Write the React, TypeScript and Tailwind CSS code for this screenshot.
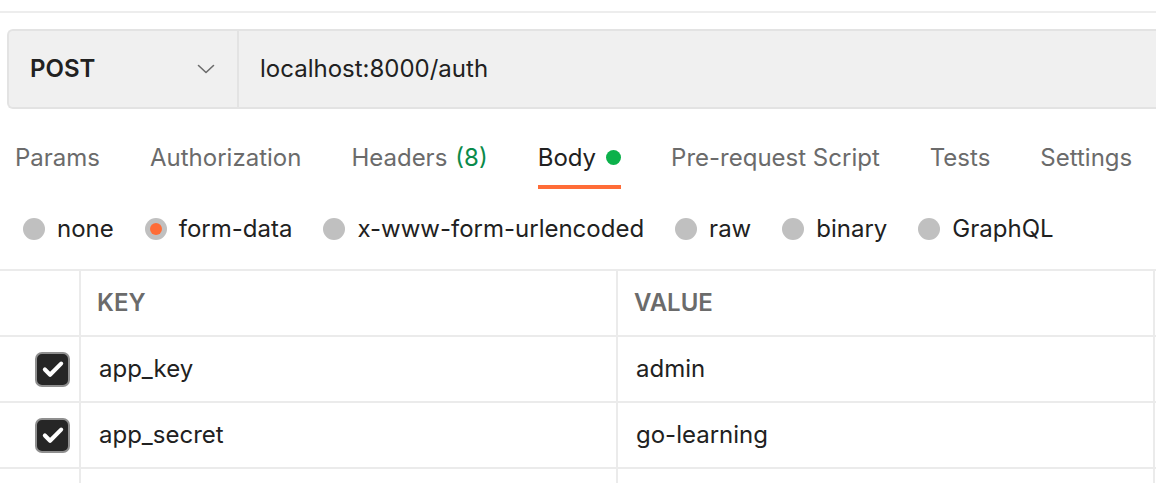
const TABS = [
  { label: "Params" },
  { label: "Authorization" },
  { label: "Headers", count: "(8)" },
  { label: "Body", active: true },
  { label: "Pre-request Script" },
  { label: "Tests" },
  { label: "Settings" },
];

const BODY_TYPES = ["none", "form-data", "x-www-form-urlencoded", "raw", "binary", "GraphQL"];

const ROWS = [
  { key: "app_key", value: "admin" },
  { key: "app_secret", value: "go-learning" },
];

function Check() {
  return (
    <span className="grid h-[35px] w-[35px] place-items-center rounded-[7px] border-2 border-[#8f8f8f] bg-[#262626]">
      <svg width="26" height="26" viewBox="0 0 24 24" fill="none" stroke="white" strokeWidth="3.8" strokeLinecap="round" strokeLinejoin="round">
        <path d="M4.5 12.5l4.8 4.8L19.5 7" />
      </svg>
    </span>
  );
}

export default function App() {
  return (
    <div className="h-[483px] w-[1156px] overflow-hidden bg-white font-['Inter',sans-serif] text-[24px] text-[#212121]">
      <div className="pt-[11px]">
        <div className="h-[2px] bg-[#ededed]" />
      </div>

      {/* request bar */}
      <div className="ml-[7px] mt-[16px] flex h-[80px] rounded-l-[6px] border-2 border-r-0 border-[#e3e3e3] bg-[#f0f0f0]">
        <div className="flex w-[230px] items-center justify-between border-r-2 border-[#e3e3e3] pl-[21px] pr-[22px]">
          <span className="font-semibold text-[#212121]">POST</span>
          <svg width="18" height="10" viewBox="0 0 18 10" fill="none" stroke="#6b6b6b" strokeWidth="1.6" strokeLinecap="round" strokeLinejoin="round">
            <path d="M1.5 1.5L9 8.5L16.5 1.5" />
          </svg>
        </div>
        <div className="flex items-center pl-[21px] text-[#212121]">localhost:8000/auth</div>
      </div>

      {/* tabs */}
      <div className="mt-[30px] flex gap-[50px] pl-[15px]">
        {TABS.map((t) => (
          <div key={t.label} className="flex flex-col">
            <div className={`flex h-[37px] items-center gap-[10px] ${t.active ? "text-[#212121]" : "text-[#6b6b6b]"}`}>
              <span>
                {t.label}
                {t.count && <span className="ml-[8px] text-[#0a8a4a]">{t.count}</span>}
              </span>
              {t.active && <span className="h-[15px] w-[15px] rounded-full bg-[#0cb14b]" />}
            </div>
            <div className={`mt-[9px] h-[4px] ${t.active ? "bg-[#ff6c37]" : ""}`} />
          </div>
        ))}
      </div>

      {/* body types */}
      <div className="mt-[18px] flex h-[44px] items-center gap-[31px] pl-[23px]">
        {BODY_TYPES.map((b) => (
          <div key={b} className="flex items-center gap-[12px]">
            <span className="grid h-[22px] w-[22px] place-items-center rounded-full bg-[#c0c0c0]">
              {b === "form-data" && <span className="h-[12px] w-[12px] rounded-full bg-[#ff6c37]" />}
            </span>
            <span>{b}</span>
          </div>
        ))}
      </div>

      {/* key/value table */}
      <div className="mt-[18px] border-t-2 border-[#ebebeb]">
        <div className="flex h-[66px] border-b-2 border-[#ebebeb] font-semibold text-[#6b6b6b]">
          <div className="w-[81px] border-r-2 border-[#ebebeb]" />
          <div className="flex w-[537px] items-center border-r-2 border-[#ebebeb] pl-[16px]">KEY</div>
          <div className="flex w-[537px] items-center border-r-2 border-[#ebebeb] pl-[16px]">VALUE</div>
        </div>
        {ROWS.map((r) => (
          <div key={r.key} className="flex h-[66px] border-b-2 border-[#ebebeb]">
            <div className="flex w-[81px] items-center justify-end border-r-2 border-[#ebebeb] pr-[9px]">
              <Check />
            </div>
            <div className="flex w-[537px] items-center border-r-2 border-[#ebebeb] pl-[18px]">{r.key}</div>
            <div className="flex w-[537px] items-center border-r-2 border-[#ebebeb] pl-[18px]">{r.value}</div>
          </div>
        ))}
        <div className="flex h-[30px]">
          <div className="w-[81px] border-r-2 border-[#ebebeb]" />
          <div className="w-[537px] border-r-2 border-[#ebebeb]" />
          <div className="w-[537px] border-r-2 border-[#ebebeb]" />
        </div>
      </div>
    </div>
  );
}
